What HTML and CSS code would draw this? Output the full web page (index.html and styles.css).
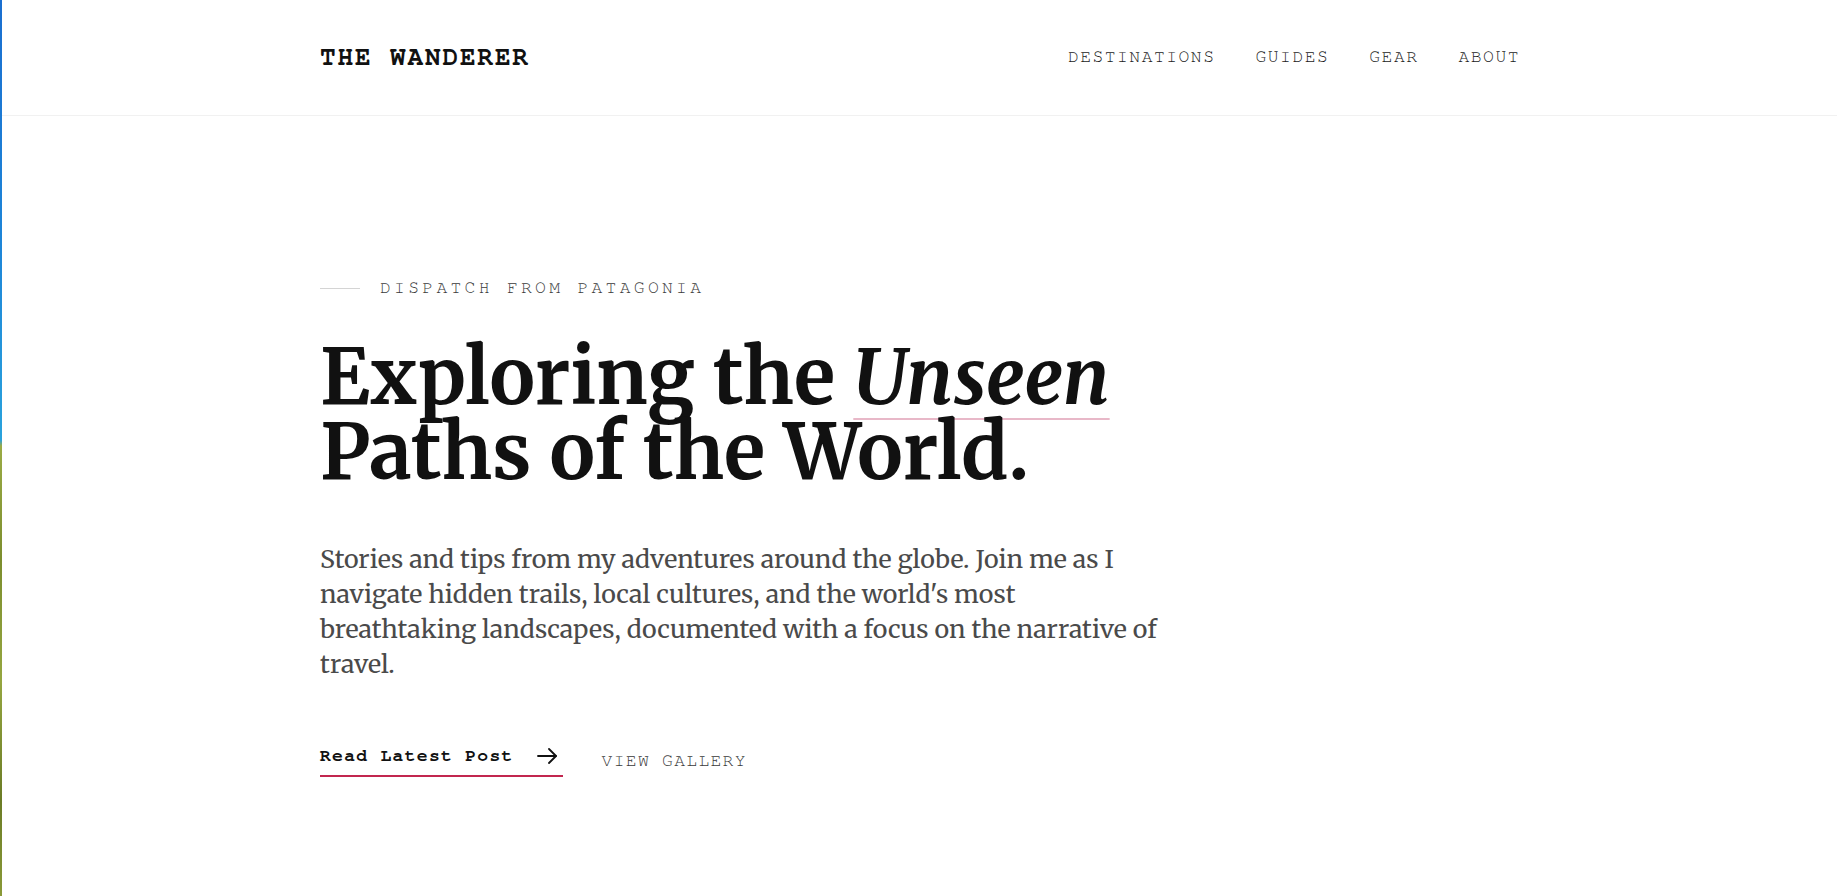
FILE: index.html
```html
<!DOCTYPE html>
<html lang="en">
<head>
<meta charset="utf-8">
<title>The Wanderer</title>
<link rel="stylesheet" href="styles.css">
</head>
<body>
<div class="edge-strip"></div>
<header class="site-header">
  <div class="container header-inner">
    <a class="logo" href="#">THE WANDERER</a>
    <nav class="main-nav">
      <a href="#">DESTINATIONS</a>
      <a href="#">GUIDES</a>
      <a href="#">GEAR</a>
      <a href="#">ABOUT</a>
    </nav>
  </div>
</header>
<main class="hero">
  <div class="container">
    <div class="eyebrow"><span class="eyebrow-line"></span><span class="eyebrow-text">DISPATCH FROM PATAGONIA</span></div>
    <h1 class="hero-title">Exploring the <em class="accent">Unseen</em><br>Paths of the World.</h1>
    <p class="hero-lead">Stories and tips from my adventures around the globe. Join me as I navigate hidden trails, local cultures, and the world's most breathtaking landscapes, documented with a focus on the narrative of travel.</p>
    <div class="actions">
      <a class="btn-primary" href="#"><span>Read Latest Post</span>
        <svg class="arrow" width="24" height="24" viewBox="0 0 24 24" fill="none" stroke="#111" stroke-width="1.8" stroke-linecap="round" stroke-linejoin="round"><path d="M3 12h18"/><path d="M14 5l7 7-7 7"/></svg>
      </a>
      <a class="btn-link" href="#">VIEW GALLERY</a>
    </div>
  </div>
</main>
</body>
</html>
```
FILE: styles.css
```css
* { box-sizing: border-box; }
html, body { margin: 0; padding: 0; background: #fff; }
body { font-family: "Merriweather", "DejaVu Serif", serif; color: #111; min-height: 896px; position: relative; }
a { text-decoration: none; color: inherit; }

.edge-strip {
  position: absolute; left: 0; top: 0; width: 2px; height: 896px;
  background: linear-gradient(to bottom, #1a6fd0 0, #1e86d8 250px, #2aa2dc 440px, #9aab45 446px, #7c8e2e 560px, #95a640 680px, #6b7c26 800px, #8a9a38 896px);
}

.container { max-width: 1203px; margin: 0 auto; padding-left: 3px; }

.site-header { height: 116px; border-bottom: 1px solid #f1f1f1; }
.header-inner { height: 115px; padding-bottom: 2px; display: flex; align-items: center; justify-content: space-between; }
.logo { font-family: "Nimbus Mono PS", "Nimbus Mono L", "FreeMono", "Courier New", "Liberation Mono", monospace; font-weight: 700; font-size: 26px; letter-spacing: 1.9px; color: #111; }
.main-nav { display: flex; gap: 40px; }
.main-nav a { font-family: "Nimbus Mono PS", "Nimbus Mono L", "FreeMono", "Courier New", "Liberation Mono", monospace; font-size: 18px; letter-spacing: 1.5px; color: #1a1a1a; }

.hero { padding-top: 162px; }
.eyebrow { display: flex; align-items: center; gap: 20px; height: 20px; }
.eyebrow-line { width: 40px; height: 1px; background: #d4d4d4; }
.eyebrow-text { font-family: "Nimbus Mono PS", "Nimbus Mono L", "FreeMono", "Courier New", "Liberation Mono", monospace; font-size: 18px; letter-spacing: 3.3px; color: #3a3a3a; }

.hero-title { margin: 42px 0 0; font-family: "Merriweather", "DejaVu Serif", serif; font-weight: 700; font-size: 76.2px; line-height: 75px; letter-spacing: 0; color: #111; }
.accent { font-style: italic; text-decoration: underline; text-decoration-color: #e8b8c8; text-decoration-thickness: 2px; text-underline-offset: 14px; }

.hero-lead { margin: 52px 0 0; max-width: 840px; font-family: "Merriweather", "DejaVu Serif", serif; font-size: 25px; line-height: 35px; color: #4a4a4a; }

.actions { margin-top: 62px; display: flex; align-items: center; gap: 39px; }
.btn-primary { display: inline-flex; align-items: center; gap: 21px; padding: 0 4px 7px 0; border-bottom: 2px solid #c2264f; font-family: "Nimbus Mono PS", "Nimbus Mono L", "FreeMono", "Courier New", "Liberation Mono", monospace; font-weight: 700; font-size: 18px; line-height: 24px; letter-spacing: 1.3px; color: #111; }
.arrow { display: block; }
.btn-link { font-family: "Nimbus Mono PS", "Nimbus Mono L", "FreeMono", "Courier New", "Liberation Mono", monospace; font-size: 18px; line-height: 24px; letter-spacing: 1.3px; color: #3a3a3a; }
```
